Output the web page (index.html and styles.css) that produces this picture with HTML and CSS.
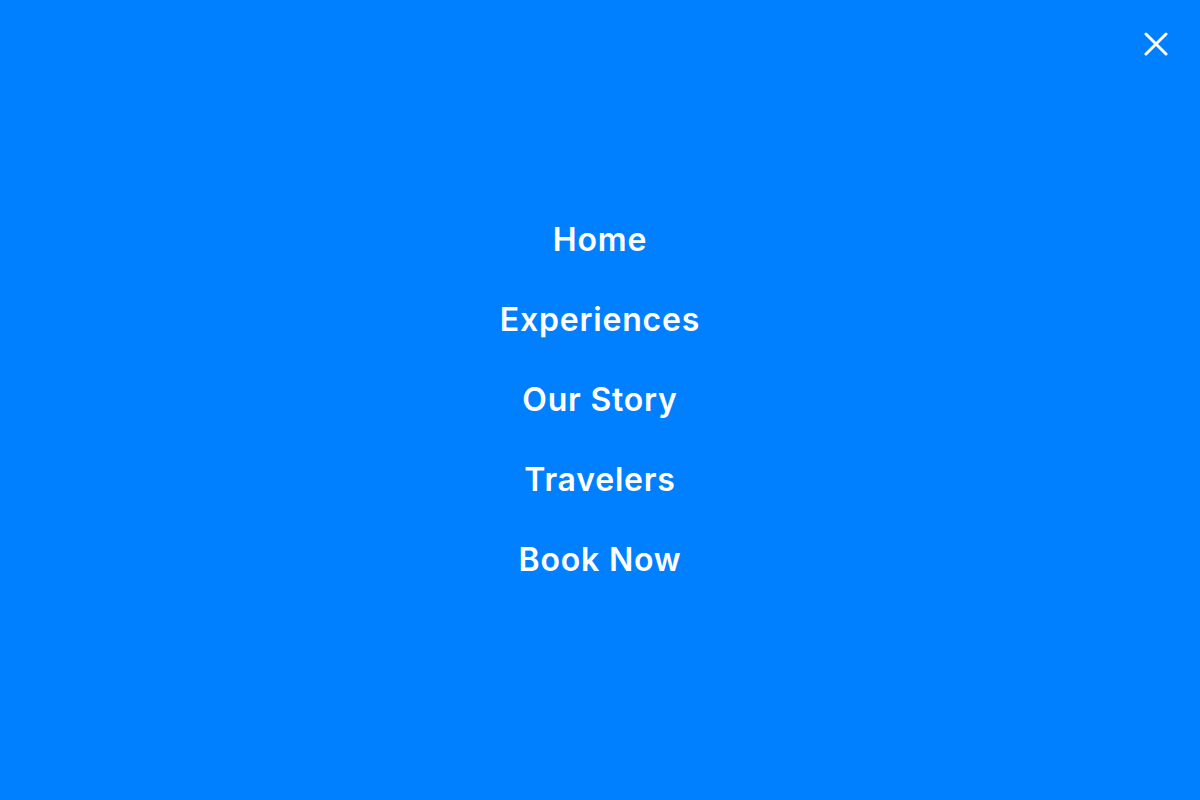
FILE: index.html
```html
<!DOCTYPE html>
<html lang="en">
<head>
<meta charset="utf-8">
<title>Menu</title>
<link rel="stylesheet" href="styles.css">
</head>
<body>
<div class="overlay">
  <button class="close" aria-label="Close menu">
    <svg viewBox="0 0 24 24" width="24" height="24"><path d="M2 2 L22 22 M22 2 L2 22" stroke="#fff" stroke-width="3" stroke-linecap="round" fill="none"/></svg>
  </button>
  <nav class="menu">
    <a href="#">Home</a>
    <a href="#">Experiences</a>
    <a href="#">Our Story</a>
    <a href="#">Travelers</a>
    <a href="#">Book Now</a>
  </nav>
</div>
</body>
</html>
```
FILE: styles.css
```css
html, body {
  margin: 0;
  padding: 0;
  height: 100%;
}
body {
  background: #007fff;
  font-family: "Inter", "Open Sans", sans-serif;
}
.overlay {
  position: relative;
  height: 100vh;
  display: flex;
  align-items: center;
  justify-content: center;
}
.close {
  position: absolute;
  top: 32px;
  right: 32px;
  width: 24px;
  height: 24px;
  padding: 0;
  border: 0;
  background: none;
  cursor: pointer;
}
.close svg { display: block; }
.menu {
  display: flex;
  flex-direction: column;
  align-items: center;
}
.menu a {
  color: #fff;
  text-decoration: none;
  font-size: 32px;
  font-weight: 600;
  line-height: 80px;
  letter-spacing: 0.8px;
}
```
